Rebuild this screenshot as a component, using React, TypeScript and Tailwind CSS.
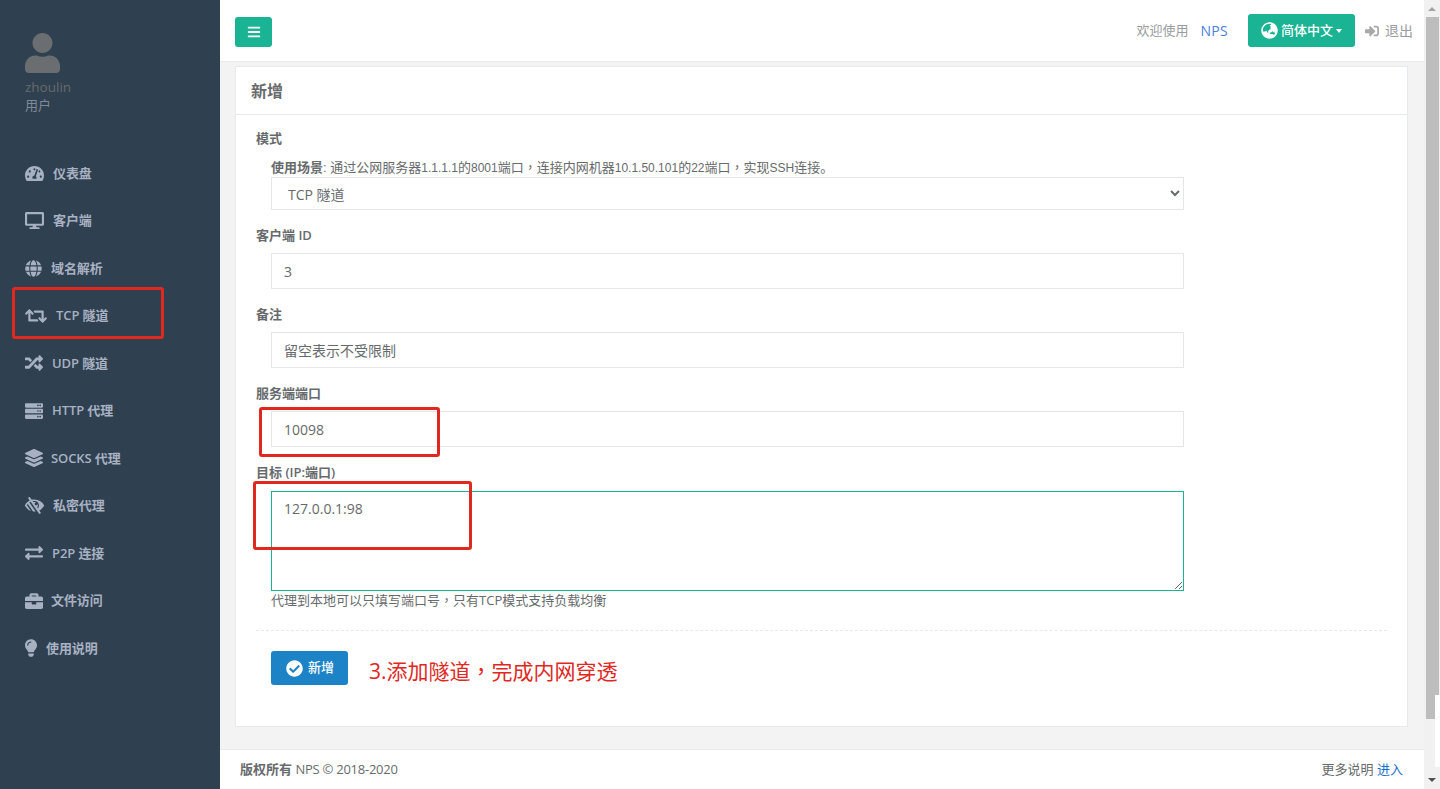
import React from 'react'
import {
  FaBars,
  FaBriefcase,
  FaCheckCircle,
  FaDesktop,
  FaExchangeAlt,
  FaGlobe,
  FaGlobeAsia,
  FaLayerGroup,
  FaLightbulb,
  FaLowVision,
  FaRandom,
  FaRetweet,
  FaServer,
  FaSignInAlt,
  FaTachometerAlt,
  FaUser,
} from 'react-icons/fa'

const font = 'font-["Open_Sans","Noto_Sans_CJK_SC",sans-serif]'

const navItems = [
  { icon: FaTachometerAlt, label: '仪表盘', gap: 'gap-[9px]', size: 'text-[19px]' },
  { icon: FaDesktop, label: '客户端', gap: 'gap-[9px]', size: 'text-[19px]' },
  { icon: FaGlobe, label: '域名解析', gap: 'gap-[9px]', size: 'text-[17px]' },
  { icon: FaRetweet, label: 'TCP 隧道', gap: 'gap-[9px]', size: 'text-[22px]' },
  { icon: FaRandom, label: 'UDP 隧道', gap: 'gap-[9px]', size: 'text-[18px]' },
  { icon: FaServer, label: 'HTTP 代理', gap: 'gap-[9px]', size: 'text-[18px]' },
  { icon: FaLayerGroup, label: 'SOCKS 代理', gap: 'gap-[8px]', size: 'text-[18px]' },
  { icon: FaLowVision, label: '私密代理', gap: 'gap-[9px]', size: 'text-[19px]' },
  { icon: FaExchangeAlt, label: 'P2P 连接', gap: 'gap-[9px]', size: 'text-[18px]' },
  { icon: FaBriefcase, label: '文件访问', gap: 'gap-[8px]', size: 'text-[18px]' },
  { icon: FaLightbulb, label: '使用说明', gap: 'gap-[9px]', size: 'h-[18px] w-[12px]' },
]

// centred full-width comma, as the reference's font draws it
const Comma = () => <span className='font-["Noto_Sans_CJK_TC"]'>，</span>

// the usage line sets its latin runs a size smaller
const Latin = ({ children }: { children: React.ReactNode }) => <span className="text-[12px]">{children}</span>

const Sidebar = () => (
  <aside className="relative w-[220px] shrink-0 bg-[#2f4050] pl-[25px] text-[13px]">
    <div className="pt-[33px] text-[#676a6c]">
      <FaUser className="h-[40px] w-[35px] text-[#6b6e70]" />
      <div className="mt-[5px] h-[19px] text-[13.5px] leading-[19px]">zhoulin</div>
      <div className="mt-[-1px] text-[13px] leading-[18px] text-[#7f8a98]">用户</div>
    </div>
    <nav className="mt-[35.5px]">
      {navItems.map(({ icon: Icon, label, gap, size }) => (
        <div key={label} className={`flex h-[47.5px] items-center font-semibold tracking-[-0.1px] text-[#a7b1c2] ${gap}`}>
          <Icon className={`shrink-0 ${size}`} />
          <span>{label}</span>
        </div>
      ))}
    </nav>
    {/* red annotation round the TCP item */}
    <div className="absolute left-[12px] top-[287px] h-[52px] w-[152px] rounded-[3px] border-[3px] border-[#e0281f]" />
  </aside>
)

const Header = () => (
  <header className="flex h-[62px] items-center justify-between border-b border-[#e7eaec] bg-white pl-[15px] pr-[11px] text-[13px]">
    <button className="mb-[-3px] flex h-[30px] w-[37px] items-center justify-center rounded-[3px] bg-[#1ab394] text-[14px] text-white">
      <FaBars />
    </button>
    <div className="flex items-center text-[#999c9e]">
      <span>欢迎使用</span>
      <span className="ml-[12px] text-[14px] tracking-[0.3px] text-[#4a7fdc]">NPS</span>
      <button className="ml-[20px] flex h-[33px] w-[107px] items-center justify-center rounded-[3px] bg-[#1ab394] font-medium text-white">
        <FaGlobeAsia className="mr-[3px] text-[17px]" />
        简体中文
        <span className="ml-[3px] border-x-[3.5px] border-t-[4px] border-x-transparent border-t-white" />
      </button>
      <FaSignInAlt className="ml-[10px] mr-[6px] text-[14px] text-[#a7a9ab]" />
      <span className="text-[14px]">退出</span>
    </div>
  </header>
)

const Label = ({ children, className = '' }: { children: React.ReactNode; className?: string }) => (
  <div className={`text-[13px] font-semibold leading-[18px] text-[#676a6c] ${className}`}>{children}</div>
)

const inputClass =
  'ml-[15px] block w-[913px] rounded-none border bg-white px-3 text-[14px] text-[#676a6c] outline-none'

const Form = () => (
  <section className="relative mt-[4px] ml-[15px] mr-[16px] h-[661px] border border-[#e7eaec] bg-white">
    <h2 className="h-[48px] border-b border-[#e7eaec] pl-[15px] pt-[13px] text-[16px] font-semibold leading-[22px] text-[#676a6c]">
      新增
    </h2>
    <div className="pl-[20px] pt-[14px]">
      <Label>模式</Label>
      <div className='ml-[15px] mt-[11px] font-["Liberation_Sans","Noto_Sans_CJK_SC",sans-serif] text-[13px] leading-[18px] text-[#676a6c]'>
        <b className="font-semibold">使用场景</b>: 通过公网服务器<Latin>1.1.1.1</Latin>的<Latin>8001</Latin>端口<Comma />连接内网机器<Latin>10.1.50.101</Latin>的<Latin>22</Latin>端口<Comma />实现<Latin>SSH</Latin>连接。
      </div>
      <select className={`${inputClass} h-[33px] border-[#e5e6e7] pl-[12px] pt-[2px]`} defaultValue="tcp">
        <option value="tcp">TCP 隧道</option>
      </select>
      <Label className="mt-[16px]">客户端 ID</Label>
      <input readOnly className={`${inputClass} mt-[9px] h-[36px] border-[#e5e6e7]`} value="3" />
      <Label className="mt-[16px]">备注</Label>
      <input readOnly className={`${inputClass} mt-[9px] h-[36px] border-[#e5e6e7]`} value="留空表示不受限制" />
      <Label className="mt-[16px]">服务端端口</Label>
      <input readOnly className={`${inputClass} mt-[9px] h-[36px] border-[#e5e6e7]`} value="10098" />
      <Label className="mt-[16px]">目标 (IP:端口)</Label>
      <textarea
        readOnly
        className={`${inputClass} mt-[10px] h-[100px] border-[#1ab394] py-[7px] leading-[20px]`}
        value="127.0.0.1:98"
      />
      <div className="ml-[15px] text-[13px] leading-[18px] text-[#676a6c]">
        代理到本地可以只填写端口号<Comma />只有TCP模式支持负载均衡
      </div>
      <div className="mr-[20px] mt-[21px] border-t border-dashed border-[#e7eaec]" />
      <div className="ml-[15px] mt-[20px] flex items-start">
        <button className="flex h-[34px] w-[77px] items-center rounded-[3px] bg-[#1c84c6] pl-[15px] text-[13px] font-medium text-white">
          <FaCheckCircle className="mr-[5px] text-[17px]" />
          新增
        </button>
        <span className="ml-[21px] mt-[5px] text-[21px] leading-[28px] text-[#e0281f]">3.添加隧道<Comma />完成内网穿透</span>
      </div>
    </div>
    {/* red annotation rectangles */}
    <div className="absolute left-[23px] top-[340px] h-[50px] w-[181px] rounded-[3px] border-[3px] border-[#e0281f]" />
    <div className="absolute left-[17px] top-[414px] h-[69px] w-[219px] rounded-[3px] border-[3px] border-[#e0281f]" />
  </section>
)

const Footer = () => (
  <footer className="flex h-[40px] items-center justify-between border-t border-[#e7eaec] bg-white pl-[20px] pr-[21px] text-[13px] text-[#676a6c]">
    <div>
      <b className="font-semibold">版权所有</b> <span className="tracking-[-0.25px]">NPS © 2018-2020</span>
    </div>
    <div>
      更多说明 <span className="text-[#1c6fc9]">进入</span>
    </div>
  </footer>
)

const Scrollbar = () => (
  <div className="relative flex w-[16px] shrink-0 flex-col items-center bg-[#f1f1f1]">
    <div className="mt-[7px] h-0 w-0 border-x-[4px] border-b-[4px] border-x-transparent border-b-[#a3a3a3]" />
    <div className="ml-[1px] mt-[6px] h-[702px] w-[13px] bg-[#bdbdbd]" />
    <div className="absolute bottom-[7px] h-0 w-0 border-x-[4px] border-t-[4px] border-x-transparent border-t-[#505050]" />
    <div className="absolute right-0 top-[695px] h-[72px] w-[5px] bg-white" />
  </div>
)

export default function App() {
  return (
    <div className={`flex h-[789px] overflow-hidden bg-[#f3f3f4] ${font}`}>
      <Sidebar />
      <main className="flex min-w-0 flex-1 flex-col">
        <Header />
        <Form />
        <div className="flex-1" />
        <Footer />
      </main>
      <Scrollbar />
    </div>
  )
}
